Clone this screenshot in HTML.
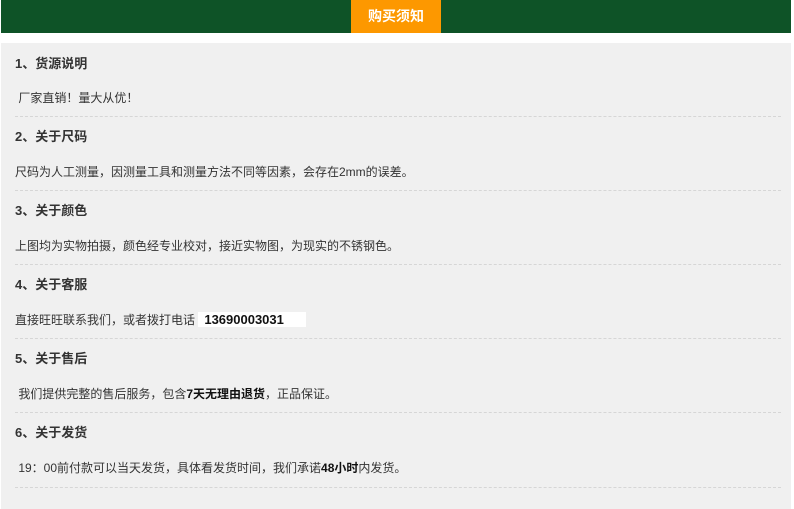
<!DOCTYPE html>
<html><head><meta charset="utf-8"><style>
*{margin:0;padding:0;box-sizing:border-box}
body{width:794px;height:509px;background:#fff;font-family:"Liberation Sans","Noto Sans CJK SC","WenQuanYi Zen Hei",sans-serif;font-size:12px;color:#333;position:relative;overflow:hidden}
.top{position:absolute;left:1px;top:0;width:790px;height:33px;background:#0e5327}
.tab{position:absolute;left:350px;top:0;width:90px;height:33px;background:#fd9800;color:#fff;font-weight:bold;font-size:14px;line-height:33px;text-align:center}
.panel{position:absolute;left:1px;top:43px;width:790px;height:466px;background:#f0f0f0}
.h{position:absolute;left:15px;font-weight:bold;font-size:13px;color:#333;line-height:16px}
.t{position:absolute;left:15px;line-height:16px}
.d{position:absolute;left:15px;width:766px;border-top:1px dashed #d6d6d6;height:0}
b{color:#111}
</style></head><body>
<div class="top"><div class="tab">购买须知</div></div>
<div class="panel"></div>
<div class="h" style="top:56px">1、货源说明</div>
<div class="t" style="top:90px">&nbsp;厂家直销！量大从优！</div>
<div class="d" style="top:116px"></div>
<div class="h" style="top:129px">2、关于尺码</div>
<div class="t" style="top:164px">尺码为人工测量，因测量工具和测量方法不同等因素，会存在2mm的误差。</div>
<div class="d" style="top:190px"></div>
<div class="h" style="top:203px">3、关于颜色</div>
<div class="t" style="top:238px">上图均为实物拍摄，颜色经专业校对，接近实物图，为现实的不锈钢色。</div>
<div class="d" style="top:264px"></div>
<div class="h" style="top:277px">4、关于客服</div>
<div class="t" style="top:312px">直接旺旺联系我们，或者拨打电话 <span style="background:#fff;padding:0 22px 0 6px;font-weight:bold;color:#111;font-size:13px">13690003031</span></div>
<div class="d" style="top:338px"></div>
<div class="h" style="top:351px">5、关于售后</div>
<div class="t" style="top:386px">&nbsp;我们提供完整的售后服务，包含<b>7天无理由退货</b>，正品保证。</div>
<div class="d" style="top:412px"></div>
<div class="h" style="top:425px">6、关于发货</div>
<div class="t" style="top:460px">&nbsp;19：00前付款可以当天发货，具体看发货时间，我们承诺<b>48小时</b>内发货。</div>
<div class="d" style="top:487px"></div>
</body></html>
